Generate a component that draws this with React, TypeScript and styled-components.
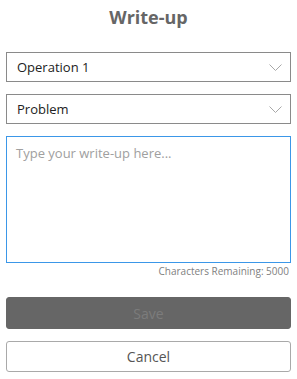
import React from 'react';
import styled, {createGlobalStyle} from "styled-components";

const GlobalStyle = createGlobalStyle`
  body {
    margin: 0;
    background: #fff;
    font-family: "Open Sans", "Noto Sans", sans-serif;
  }
`

const Chevron = () => (
  <svg width="13" height="7" viewBox="0 0 13 7">
    <path d="M0.5 0.5 L6.5 6.5 L12.5 0.5" fill="none" stroke="#a8a8a8" strokeWidth="1"/>
  </svg>
)

const Select = ({label}: {label: string}) => (
  <SelectBox>
    <span>{label}</span>
    <Chevron/>
  </SelectBox>
)

export default function App() {
  return (
    <StyledPanel>
      <GlobalStyle/>
      <Title>Write-up</Title>
      <Fields>
        <Select label="Operation 1"/>
        <Select label="Problem"/>
        <TextArea placeholder="Type your write-up here..."/>
      </Fields>
      <Counter>Characters Remaining: 5000</Counter>
      <Buttons>
        <Button primary disabled>Save</Button>
        <Button>Cancel</Button>
      </Buttons>
    </StyledPanel>
  );
}

const StyledPanel = styled.div`
  width: 297px;
  padding: 5px 6px 0;
  box-sizing: border-box;
`

const Title = styled.h1`
  margin: 0;
  text-align: center;
  font-size: 18px;
  line-height: 24px;
  font-weight: 700;
  color: #666;
`

const Fields = styled.div`
  display: flex;
  flex-direction: column;
  gap: 12px;
  margin-top: 23px;
`

const SelectBox = styled.div`
  height: 30px;
  box-sizing: border-box;
  border: 1px solid #8a8a8a;
  display: flex;
  align-items: center;
  justify-content: space-between;
  padding: 0 8px 0 10px;
  font-size: 13px;
  color: #222;
`

const TextArea = styled.textarea`
  height: 127px;
  box-sizing: border-box;
  border: 1px solid #3b97e8;
  outline: none;
  resize: none;
  padding: 7px 9px;
  font-family: inherit;
  font-size: 13px;
  color: #222;
  &::placeholder {
    color: #a0a0a0;
  }
`

const Counter = styled.div`
  text-align: right;
  font-size: 10px;
  color: #808080;
  margin-top: 1px;
  padding-right: 2px;
`

const Buttons = styled.div`
  display: flex;
  flex-direction: column;
  gap: 12px;
  margin-top: 19px;
`

const Button = styled.button<{primary?: boolean}>`
  height: ${p => p.primary ? 32 : 31}px;
  border-radius: 3px;
  font-family: inherit;
  font-size: 14px;
  border: 1px solid ${p => p.primary ? "#666" : "#a9a9a9"};
  background: ${p => p.primary ? "#666" : "#fff"};
  color: ${p => p.primary ? "#7c7c7c" : "#555"};
`
